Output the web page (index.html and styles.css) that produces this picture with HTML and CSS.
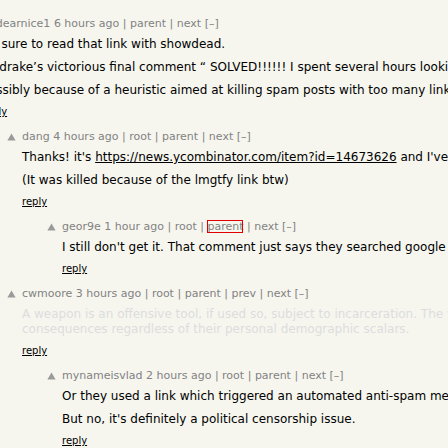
FILE: index.html
```html
<!DOCTYPE html>
<html>
<head>
<meta charset="utf-8">
<title>Comments</title>
<link rel="stylesheet" href="styles.css">
</head>
<body>
<div class="thread">

  <div class="comtr d0">
    <div class="votelinks"><svg class="arrow" viewBox="0 0 9 8"><polygon points="4.5,0.5 8.6,7.6 0.4,7.6"/></svg></div>
    <div class="default">
      <div class="comhead"><a href="#">nodearnice1</a> <span>6 hours ago</span> <span class="sep">|</span> <a href="#">parent</a> <span class="sep">|</span> <a href="#">next</a> <a href="#">[–]</a></div>
      <div class="comment">
        <div class="commtext">
          <p>Be sure to read that link with showdead.</p>
          <p>icedrake’s victorious final comment “ SOLVED!!!!!! I spent several hours looking into this and finally found the answer.</p>
          <p>Possibly because of a heuristic aimed at killing spam posts with too many links in them.</p>
        </div>
        <div class="reply"><a href="#">reply</a></div>
      </div>
    </div>
  </div>

  <div class="comtr d1">
    <div class="votelinks"><svg class="arrow" viewBox="0 0 9 8"><polygon points="4.5,0.5 8.6,7.6 0.4,7.6"/></svg></div>
    <div class="default">
      <div class="comhead"><a href="#">dang</a> <span>4 hours ago</span> <span class="sep">|</span> <a href="#">root</a> <span class="sep">|</span> <a href="#">parent</a> <span class="sep">|</span> <a href="#">next</a> <a href="#">[–]</a></div>
      <div class="comment">
        <div class="commtext">
          <p>Thanks! it's <a href="#">https://news.ycombinator.com/item?id=14673626</a> and I've emailed them about it.</p>
          <p>(It was killed because of the lmgtfy link btw)</p>
        </div>
        <div class="reply"><a href="#">reply</a></div>
      </div>
    </div>
  </div>

  <div class="comtr d2">
    <div class="votelinks"><svg class="arrow" viewBox="0 0 9 8"><polygon points="4.5,0.5 8.6,7.6 0.4,7.6"/></svg></div>
    <div class="default">
      <div class="comhead"><a href="#">geor9e</a> <span>1 hour ago</span> <span class="sep">|</span> <a href="#">root</a> <span class="sep">|</span> <a href="#" class="focus">parent</a> <span class="sep">|</span> <a href="#">next</a> <a href="#">[–]</a></div>
      <div class="comment">
        <div class="commtext">
          <p>I still don't get it. That comment just says they searched google and found nothing at all.</p>
        </div>
        <div class="reply"><a href="#">reply</a></div>
      </div>
    </div>
  </div>

  <div class="comtr d1">
    <div class="votelinks"><svg class="arrow" viewBox="0 0 9 8"><polygon points="4.5,0.5 8.6,7.6 0.4,7.6"/></svg></div>
    <div class="default">
      <div class="comhead"><a href="#">cwmoore</a> <span>3 hours ago</span> <span class="sep">|</span> <a href="#">root</a> <span class="sep">|</span> <a href="#">parent</a> <span class="sep">|</span> <a href="#">prev</a> <span class="sep">|</span> <a href="#">next</a> <a href="#">[–]</a></div>
      <div class="comment">
        <div class="commtext faded">
          <p>A weapon is an offensive tool, if used so, subject to incarceration. The wielder should face the<br>consequences regardless of their personal demographic scalars.</p>
        </div>
        <div class="reply"><a href="#">reply</a></div>
      </div>
    </div>
  </div>

  <div class="comtr d2">
    <div class="votelinks"><svg class="arrow" viewBox="0 0 9 8"><polygon points="4.5,0.5 8.6,7.6 0.4,7.6"/></svg></div>
    <div class="default">
      <div class="comhead"><a href="#">mynameisvlad</a> <span>2 hours ago</span> <span class="sep">|</span> <a href="#">root</a> <span class="sep">|</span> <a href="#">parent</a> <span class="sep">|</span> <a href="#">next</a> <a href="#">[–]</a></div>
      <div class="comment">
        <div class="commtext">
          <p>Or they used a link which triggered an automated anti-spam mechanism of some kind.</p>
          <p>But no, it's definitely a political censorship issue.</p>
        </div>
        <div class="reply"><a href="#">reply</a></div>
      </div>
    </div>
  </div>

</div>
</body>
</html>
```
FILE: styles.css
```css
html, body {
  margin: 0;
  padding: 0;
  background: #f6f6ef;
  overflow: hidden;
}

body {
  font-family: "DejaVu Sans", Verdana, sans-serif;
}

.thread {
  margin-left: -40px;
  padding-top: 17px;
  width: 1400px;
}

.comtr {
  display: flex;
  align-items: flex-start;
  margin-bottom: 12px;
}

.d1 { padding-left: 40px; }
.d2 { padding-left: 80px; }

.votelinks {
  width: 22px;
  flex: none;
}

.arrow {
  display: block;
  width: 9px;
  height: 8px;
  margin: 3px 0 0 7px;
  fill: #9a9a9a;
}

.comhead {
  font-size: 11px;
  line-height: 13px;
  color: #828282;
  white-space: nowrap;
}

.comhead a {
  color: #828282;
  text-decoration: none;
}

.comhead .focus {
  outline: 1px solid #e00000;
  outline-offset: -1px;
}

.comment {
  margin-top: 7px;
}

.commtext {
  font-size: 12px;
  line-height: 15px;
  color: #000;
}

.commtext p {
  margin: 8px 0 0;
  white-space: nowrap;
}

.commtext p:first-child {
  margin-top: 0;
}

.commtext a {
  color: #000;
  text-decoration: underline;
}

.commtext.faded {
  color: #dddddd;
}

.reply {
  margin-top: 8px;
  font-size: 10px;
  line-height: 12px;
}

.reply a {
  color: #000;
  text-decoration: underline;
}
```
